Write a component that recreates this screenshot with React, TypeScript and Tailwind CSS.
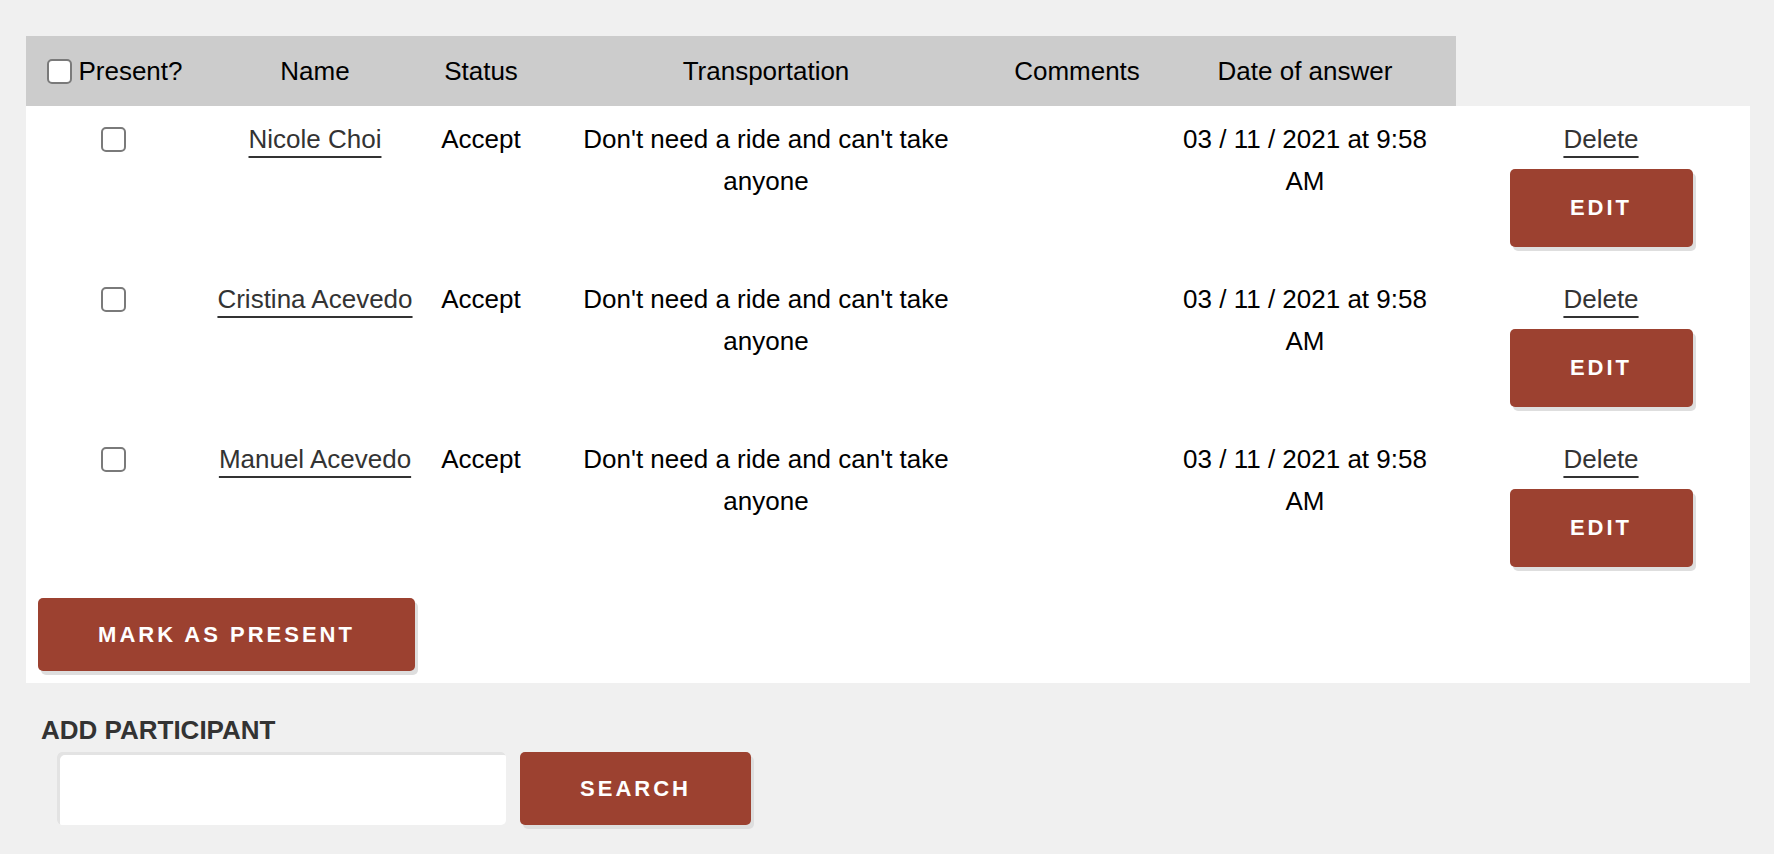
import React from "react";

type Participant = {
  name: string;
  status: string;
  transport: string;
  comments: string;
  answeredAt: string;
};

const participants: Participant[] = [
  {
    name: "Nicole Choi",
    status: "Accept",
    transport: "Don't need a ride and can't take anyone",
    comments: "",
    answeredAt: "03 / 11 / 2021 at 9:58 AM",
  },
  {
    name: "Cristina Acevedo",
    status: "Accept",
    transport: "Don't need a ride and can't take anyone",
    comments: "",
    answeredAt: "03 / 11 / 2021 at 9:58 AM",
  },
  {
    name: "Manuel Acevedo",
    status: "Accept",
    transport: "Don't need a ride and can't take anyone",
    comments: "",
    answeredAt: "03 / 11 / 2021 at 9:58 AM",
  },
];

const grid =
  "grid grid-cols-[174px_230px_102px_468px_154px_302px_290px]";

function Box() {
  return (
    <span className="inline-block w-[25px] h-[25px] shrink-0 rounded-[5px] border-2 border-[#7a7a7a] bg-white" />
  );
}

function RedButton({
  label,
  className,
}: {
  label: string;
  className: string;
}) {
  return (
    <button
      type="button"
      className={
        "flex items-center justify-center rounded-[5px] bg-[#9c4130] text-white font-bold text-[22px] tracking-[3px] shadow-[3px_4px_0_#dedede] " +
        className
      }
    >
      {label}
    </button>
  );
}

export default function App() {
  return (
    <div
      className="min-h-[854px] bg-[#f0f0f0] pt-[36px] pl-[26px] text-black text-[26px] leading-[42px]"
      style={{ fontFamily: '"Liberation Sans", Arial, sans-serif' }}
    >
      <div className="w-[1724px]">
        {/* column headings; the action column has none */}
        <div className={grid + " h-[70px]"}>
          <div className="bg-[#cccccc] flex items-center justify-center gap-[6px] pl-[4px]">
            <Box />
            <span>Present?</span>
          </div>
          <div className="bg-[#cccccc] flex items-center justify-center">Name</div>
          <div className="bg-[#cccccc] flex items-center justify-center">Status</div>
          <div className="bg-[#cccccc] flex items-center justify-center">
            Transportation
          </div>
          <div className="bg-[#cccccc] flex items-center justify-center">Comments</div>
          <div className="bg-[#cccccc] flex items-center justify-center">
            Date of answer
          </div>
          <div />
        </div>

        <div className="bg-white">
          {participants.map((p) => (
            <div key={p.name} className={grid + " h-[160px] pt-[12px] text-center"}>
              <div className="flex justify-center pt-[9px]">
                <Box />
              </div>
              <div>
                <a className="text-[#333333] underline decoration-2 underline-offset-[8px] decoration-[#333333]">
                  {p.name}
                </a>
              </div>
              <div>{p.status}</div>
              <div className="px-[20px]">{p.transport}</div>
              <div className="px-[8px]">{p.comments}</div>
              <div className="px-[20px]">{p.answeredAt}</div>
              <div className="flex flex-col items-center">
                <a className="text-[#333333] underline decoration-2 underline-offset-[8px] decoration-[#333333]">
                  Delete
                </a>
                <RedButton label="EDIT" className="mt-[9px] w-[183px] h-[78px]" />
              </div>
            </div>
          ))}
          <div className="p-[12px]">
            <RedButton label="MARK AS PRESENT" className="w-[377px] h-[73px]" />
          </div>
        </div>

        <div className="pl-[15px] pt-[32px]">
          <h2 className="font-bold text-[#333333] leading-[30px]">ADD PARTICIPANT</h2>
          <div className="flex gap-[14px] pl-[16px] pt-[7px]">
            <input
              type="text"
              className="w-[449px] h-[73px] rounded-[5px] bg-white shadow-[inset_3px_3px_0_#e3e3e3] outline-none px-[10px]"
            />
            <RedButton label="SEARCH" className="w-[231px] h-[73px]" />
          </div>
        </div>
      </div>
    </div>
  );
}
